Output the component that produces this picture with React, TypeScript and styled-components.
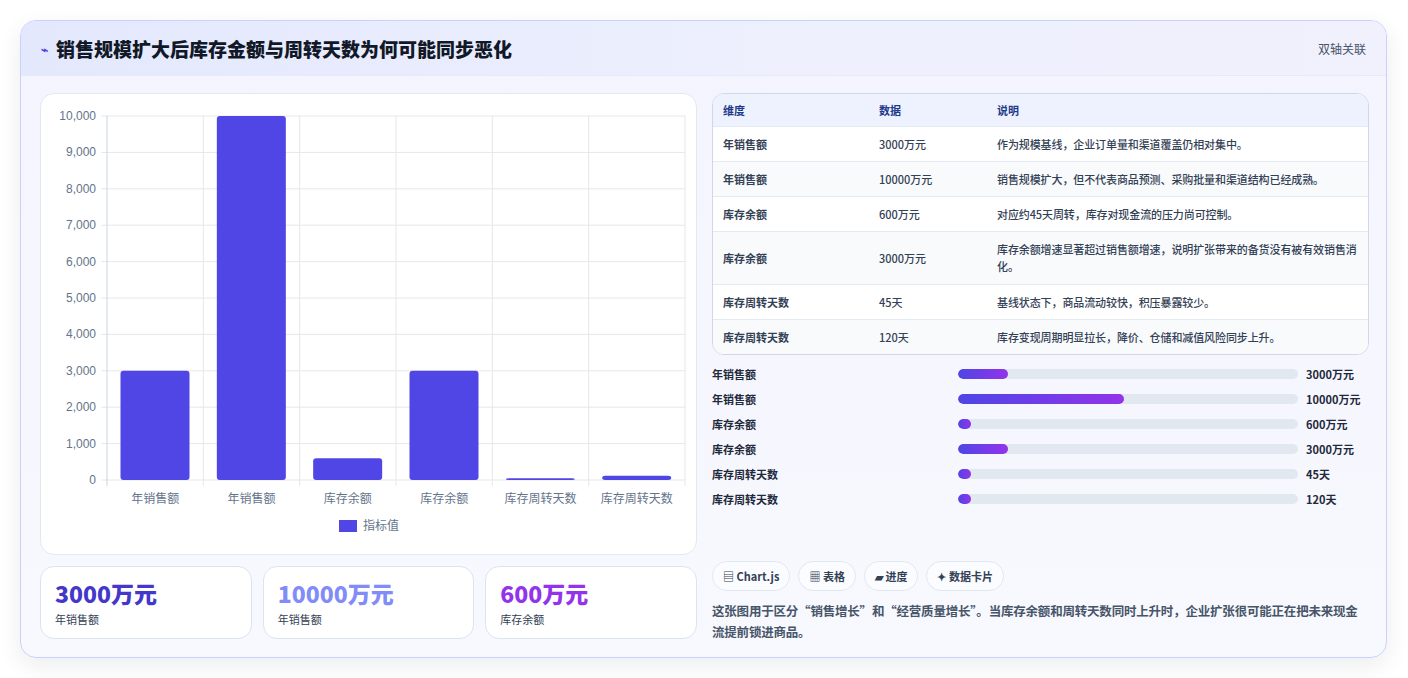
import React from "react";
import styled, { createGlobalStyle } from "styled-components";

const G = createGlobalStyle`
  html,body{margin:0;padding:0;background:#fff;}
  body{font-family:"Noto Sans CJK SC","Noto Sans",sans-serif;color:#1e293b;}
`;
const Page = styled.div`padding:20px 21px 20px 20px;`;
const Card = styled.div`
  border:1px solid #c7d2fe;border-radius:16px;overflow:hidden;height:638px;box-sizing:border-box;
  background:linear-gradient(180deg,#f3f4fe 0%,#f8f9fe 100%);
  box-shadow:0 8px 24px rgba(15,23,42,.08);
`;
const Header = styled.div`
  height:55px;display:flex;align-items:center;justify-content:space-between;padding:0 20px;
  background:linear-gradient(90deg,#e3e8fd,#eef0fd 60%,#f1f0fd);
  border-bottom:1px solid #e6e9f7;box-sizing:border-box;
`;
const Title = styled.h1`margin:0;font-size:19px;font-weight:800;color:#111827;display:flex;align-items:center;gap:8px;`;
const Tag = styled.span`font-size:12px;color:#475569;`;
const Body = styled.div`display:grid;grid-template-columns:657px 657px;gap:15px;padding:17px 19px 0 19px;`;
const Col = styled.div`display:flex;flex-direction:column;`;
const ChartBox = styled.div`background:#fff;border:1px solid #e2e8f0;border-radius:14px;height:462px;box-sizing:border-box;`;
const Kpis = styled.div`display:grid;grid-template-columns:repeat(3,1fr);gap:11px;margin-top:11px;`;
const Kpi = styled.div`background:#fff;border:1px solid #dbe3f3;border-radius:14px;height:73px;box-sizing:border-box;padding:10px 14px;`;
const KV = styled.div<{c:string}>`font-size:23px;font-weight:800;color:${p=>p.c};line-height:32px;`;
const KL = styled.div`font-size:11px;color:#334155;margin-top:2px;`;
const Table = styled.div`border:1px solid #cfd8ea;border-radius:12px;overflow:hidden;background:#fff;`;
const Row = styled.div<{h?:boolean;alt?:boolean;tall?:boolean}>`
  display:grid;grid-template-columns:156px 118px 1fr;padding:0 4px 0 10px;box-sizing:border-box;
  height:${p=>p.h?32:p.tall?53:35}px;align-items:center;font-size:11px;
  background:${p=>p.h?"#eef2ff":p.alt?"#f8fafc":"#fff"};
  color:${p=>p.h?"#1e3a8a":"#334155"};font-weight:${p=>p.h?700:500};
  border-top:${p=>p.h?"none":"1px solid #e5e9f2"};
  & > span:first-child{font-weight:700;}
  & > span:last-child{line-height:17px;letter-spacing:-0.1px;}
`;
const Bars = styled.div`display:flex;flex-direction:column;gap:7px;margin-top:10px;`;
const BRow = styled.div`display:grid;grid-template-columns:246px 340px 1fr;gap:0;align-items:center;height:18px;font-size:11px;`;
const BL = styled.span`font-weight:600;color:#1e293b;`;
const Track = styled.div`height:10px;border-radius:5px;background:#e2e8f0;overflow:hidden;`;
const Fill = styled.div`height:100%;border-radius:5px;background:linear-gradient(90deg,#4f46e5,#9333ea);`;
const BV = styled.span`font-weight:700;padding-left:8px;color:#1e293b;`;
const Chips = styled.div`display:flex;gap:8px;margin-top:53px;`;
const Chip = styled.span`font-size:11px;font-weight:700;color:#334155;border:1px solid #e2e8f0;border-radius:15px;padding:6px 10px;background:#fbfcff;`;
const Note = styled.p`margin:9px 0 0;font-size:12.5px;line-height:21px;color:#475569;font-weight:600;letter-spacing:-0.2px;`;

const cats=["年销售额","年销售额","库存余额","库存余额","库存周转天数","库存周转天数"];
const vals=[3000,10000,600,3000,45,120];
function Chart(){
  const x0=66,x1=644,y0=22,y1=386,cw=(x1-x0)/6;
  const yv=(v:number)=>y1-(v/10000)*(y1-y0);
  return <svg width="655" height="460" style={{display:"block"}}>
    {Array.from({length:11},(_,i)=>{const y=yv(i*1000);return <g key={i}>
      <line x1={x0-6} x2={x1} y1={y} y2={y} stroke="#e5e7eb"/>
      <text x={x0-11} y={y+4} textAnchor="end" fontSize="12" fill="#64748b" fontFamily="Liberation Sans">{(i*1000).toLocaleString("en-US")}</text></g>})}
    {Array.from({length:7},(_,i)=><line key={i} x1={x0+i*cw} x2={x0+i*cw} y1={y0} y2={y1+6} stroke={i===0?"#cbd5e1":"#e5e7eb"}/>)}
    {vals.map((v,i)=><g key={i}>
      <rect x={x0+i*cw+13.5} y={yv(v)} width={69} height={Math.max(y1-yv(v),1.5)} rx="3" fill="#4f46e5"/>
      <text x={x0+i*cw+cw/2} y={y1+23} textAnchor="middle" fontSize="12" fill="#64748b">{cats[i]}</text></g>)}
    <rect x="298" y="426" width="18" height="12" fill="#4f46e5"/>
    <text x="322" y="436" fontSize="12" fill="#64748b">指标值</text>
  </svg>;
}
const rows=[["年销售额","3000万元","作为规模基线，企业订单量和渠道覆盖仍相对集中。"],["年销售额","10000万元","销售规模扩大，但不代表商品预测、采购批量和渠道结构已经成熟。"],["库存余额","600万元","对应约45天周转，库存对现金流的压力尚可控制。"],["库存余额","3000万元","库存余额增速显著超过销售额增速，说明扩张带来的备货没有被有效销售消化。"],["库存周转天数","45天","基线状态下，商品流动较快，积压暴露较少。"],["库存周转天数","120天","库存变现周期明显拉长，降价、仓储和减值风险同步上升。"]];
const widths=[50,166,13,50,13,13];
export default function App(){
  return <Page><G/><Card>
    <Header><Title><span style={{color:"#4f46e5",fontSize:12}}>⌁</span>销售规模扩大后库存金额与周转天数为何可能同步恶化</Title><Tag>双轴关联</Tag></Header>
    <Body>
      <Col>
        <ChartBox><Chart/></ChartBox>
        <Kpis>
          <Kpi><KV c="#4338ca">3000万元</KV><KL>年销售额</KL></Kpi>
          <Kpi><KV c="#818cf8">10000万元</KV><KL>年销售额</KL></Kpi>
          <Kpi><KV c="#9333ea">600万元</KV><KL>库存余额</KL></Kpi>
        </Kpis>
      </Col>
      <Col>
        <Table>
          <Row h><span>维度</span><span>数据</span><span>说明</span></Row>
          {rows.map((r,i)=><Row key={i} alt={i%2===1} tall={i===3}><span>{r[0]}</span><span>{r[1]}</span><span>{r[2]}</span></Row>)}
        </Table>
        <Bars>{rows.map((r,i)=><BRow key={i}><BL>{r[0]}</BL><Track><Fill style={{width:widths[i]}}/></Track><BV>{r[1]}</BV></BRow>)}</Bars>
        <Chips><Chip>▤ Chart.js</Chip><Chip>▦ 表格</Chip><Chip>▰ 进度</Chip><Chip>✦ 数据卡片</Chip></Chips>
        <Note>这张图用于区分“销售增长”和“经营质量增长”。当库存余额和周转天数同时上升时，企业扩张很可能正在把未来现金流提前锁进商品。</Note>
      </Col>
    </Body>
  </Card></Page>;
}
